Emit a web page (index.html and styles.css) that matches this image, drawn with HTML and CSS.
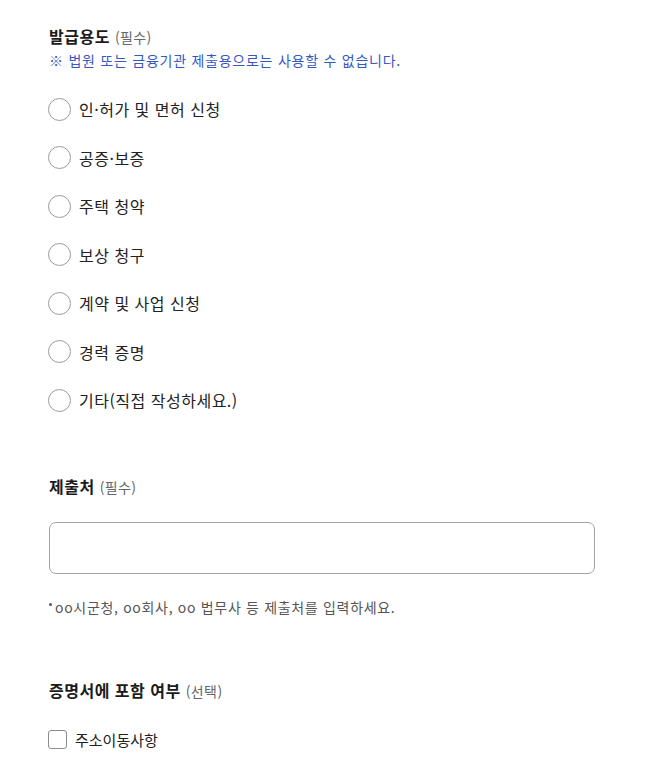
FILE: index.html
```html
<!DOCTYPE html>
<html lang="ko">
<head>
<meta charset="utf-8">
<link rel="stylesheet" href="styles.css">
</head>
<body>
<div class="page">
  <section class="group">
    <h2 class="title">발급용도 <span class="tag">(필수)</span></h2>
    <p class="notice">※ 법원 또는 금융기관 제출용으로는 사용할 수 없습니다.</p>
    <ul class="radios">
      <li class="opt"><span class="radio"></span><span>인·허가 및 면허 신청</span></li>
      <li class="opt"><span class="radio"></span><span>공증·보증</span></li>
      <li class="opt"><span class="radio"></span><span>주택 청약</span></li>
      <li class="opt"><span class="radio"></span><span>보상 청구</span></li>
      <li class="opt"><span class="radio"></span><span>계약 및 사업 신청</span></li>
      <li class="opt"><span class="radio"></span><span>경력 증명</span></li>
      <li class="opt"><span class="radio"></span><span>기타(직접 작성하세요.)</span></li>
    </ul>
  </section>
  <section class="group g2">
    <h2 class="title">제출처 <span class="tag">(필수)</span></h2>
    <div class="input"></div>
    <p class="hint"><span class="dot"></span>oo시군청, oo회사, oo 법무사 등 제출처를 입력하세요.</p>
  </section>
  <section class="group g3">
    <h2 class="title">증명서에 포함 여부 <span class="tag">(선택)</span></h2>
    <div class="check-row"><span class="check"></span><span>주소이동사항</span></div>
  </section>
</div>
</body>
</html>
```
FILE: styles.css
```css
* { box-sizing: border-box; }
html, body { margin: 0; padding: 0; background: #fff; }
body {
  font-family: "Noto Sans CJK KR", "Noto Sans", sans-serif;
  color: #222;
}
.page {
  width: 667px;
  padding: 24px 0 0 49px;
}
.group { width: 546px; }
.title {
  margin: 0;
  font-size: 16px;
  line-height: 24px;
  font-weight: 700;
  color: #1b1b1b;
  letter-spacing: 0.5px;
}
.tag {
  font-size: 14px;
  font-weight: 400;
  color: #666;
  letter-spacing: 0.4px;
}
.notice {
  margin: 1px 0 0;
  font-size: 14px;
  line-height: 20px;
  color: #3557c2;
  letter-spacing: 0.75px;
}
.radios {
  list-style: none;
  margin: 27px 0 0;
  padding: 0;
  display: flex;
  flex-direction: column;
  gap: 24.5px;
}
.opt {
  display: flex;
  align-items: center;
  gap: 8px;
  height: 24px;
  font-size: 16px;
  line-height: 24px;
  color: #222;
  letter-spacing: 0.5px;
}
.radio {
  width: 23px;
  height: 23px;
  border: 1px solid #9a9a9a;
  border-radius: 50%;
  flex: none;
  margin-left: -1px;
}
.g2 { margin-top: 62px; }
.input {
  margin-top: 23px;
  height: 52px;
  border: 1px solid #a3a3a3;
  border-radius: 7px;
}
.hint {
  margin: 23px 0 0;
  font-size: 14px;
  line-height: 20px;
  color: #555;
  display: flex;
  align-items: center;
  letter-spacing: 0.68px;
}
.dot {
  width: 3px;
  height: 3px;
  border-radius: 50%;
  background: #555;
  margin-right: 3px;
  position: relative;
  top: -3px;
}
.g3 { margin-top: 61px; }
.check-row {
  margin-top: 24px;
  display: flex;
  align-items: center;
  gap: 8px;
  height: 24px;
  font-size: 15px;
  color: #222;
}
.check {
  width: 19px;
  height: 19px;
  border: 1px solid #8c8c8c;
  border-radius: 3px;
  flex: none;
  margin-left: -1px;
}
```
